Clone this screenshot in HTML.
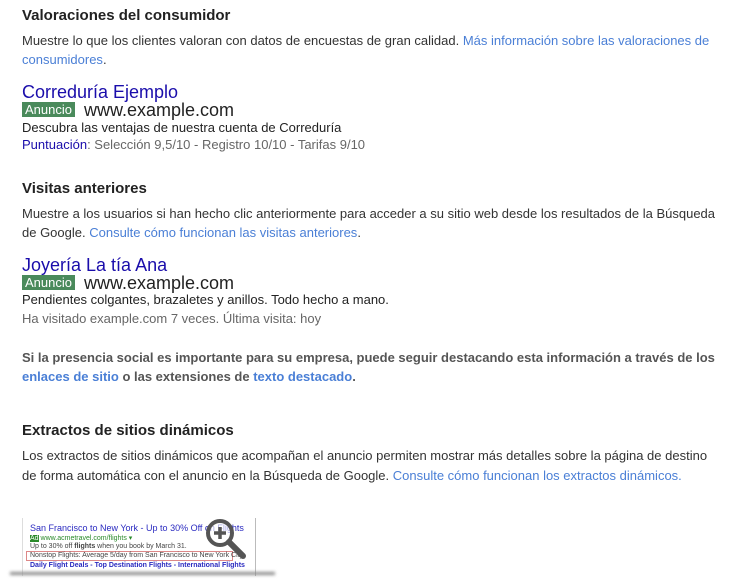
<!DOCTYPE html>
<html><head><meta charset="utf-8"><style>
body{margin:0;width:738px;height:587px;background:#fff;font-family:"Liberation Sans",Arial,sans-serif;color:#222;position:relative;overflow:hidden}
.l{position:absolute;left:22px;white-space:nowrap;font-size:13px;line-height:16px;color:#333}
.h{font-size:15px;font-weight:bold;color:#222;line-height:18px}
a{color:#4a7fd6;text-decoration:none}
.t{font-size:18px;color:#1a0dab;line-height:20px}
.u{font-size:18px;color:#222;line-height:20px}
.ad{display:inline-block;background:#4a8a5b;color:#fff;font-size:13px;line-height:15px;padding:0 3px;margin-right:9px;vertical-align:2px}
.b{font-weight:bold;color:#555}
.g{color:#666}
</style></head><body>
<div class="l h" style="top:7px">Valoraciones del consumidor</div>
<div class="l" style="top:33px">Muestre lo que los clientes valoran con datos de encuestas de gran calidad. <a>Más información sobre las valoraciones de</a></div>
<div class="l" style="top:52px"><a>consumidores</a>.</div>
<div class="l t" style="top:82px">Correduría Ejemplo</div>
<div class="l u" style="top:100px"><span class="ad">Anuncio</span>www.example.com</div>
<div class="l" style="top:120px;color:#222">Descubra las ventajas de nuestra cuenta de Correduría</div>
<div class="l" style="top:137px"><span style="color:#1a0dab">Puntuación</span><span class="g">: Selección 9,5/10 - Registro 10/10 - Tarifas 9/10</span></div>
<div class="l h" style="top:180px">Visitas anteriores</div>
<div class="l" style="top:206px">Muestre a los usuarios si han hecho clic anteriormente para acceder a su sitio web desde los resultados de la Búsqueda</div>
<div class="l" style="top:225px">de Google. <a>Consulte cómo funcionan las visitas anteriores</a>.</div>
<div class="l t" style="top:255px">Joyería La tía Ana</div>
<div class="l u" style="top:273px"><span class="ad">Anuncio</span>www.example.com</div>
<div class="l" style="top:292px;color:#222">Pendientes colgantes, brazaletes y anillos. Todo hecho a mano.</div>
<div class="l g" style="top:311px">Ha visitado example.com 7 veces. Última visita: hoy</div>
<div class="l b" style="top:350px">Si la presencia social es importante para su empresa, puede seguir destacando esta información a través de los</div>
<div class="l b" style="top:369px"><a>enlaces de sitio</a> o las extensiones de <a>texto destacado</a>.</div>
<div class="l h" style="top:422px">Extractos de sitios dinámicos</div>
<div class="l" style="top:448px">Los extractos de sitios dinámicos que acompañan el anuncio permiten mostrar más detalles sobre la página de destino</div>
<div class="l" style="top:468px">de forma automática con el anuncio en la Búsqueda de Google. <a>Consulte cómo funcionan los extractos dinámicos.</a></div>
<div style="position:absolute;left:22px;top:518px;width:232px;height:58px;border-right:1px solid #bbb;border-left:1px solid #ddd"></div>
<div style="position:absolute;left:10px;top:572px;width:265px;height:3px;background:#888;filter:blur(1.5px)"></div>
<div style="position:absolute;left:30px;top:523px;font-size:9px;color:#2a2ac0;white-space:nowrap">San Francisco to New York - Up to 30% Off on Flights</div>
<div style="position:absolute;left:30px;top:534px;font-size:7px;color:#2a8a2a;white-space:nowrap"><span style="background:#2a8a2a;color:#fff">Ad</span> www.acmetravel.com/flights ▾</div>
<div style="position:absolute;left:30px;top:543px;font-size:7px;color:#444;white-space:nowrap">Up to 30% off <b>flights</b> when you book by March 31.</div>
<div style="position:absolute;left:26px;top:551px;width:202px;height:8px;border:1px solid #d88;font-size:7px;color:#444;white-space:nowrap;padding-left:3px;line-height:8px">Nonstop Flights: Average 5/day from San Francisco to New York City</div>
<div style="position:absolute;left:30px;top:562px;font-size:7px;color:#2a2ac0;white-space:nowrap;font-weight:bold">Daily Flight Deals - Top Destination Flights - International Flights</div>
<svg style="position:absolute;left:200px;top:514px" width="50" height="50" viewBox="0 0 50 50"><circle cx="20" cy="19" r="12" fill="rgba(255,255,255,.6)" stroke="#555" stroke-width="4"/><path d="M29 28L43 42" stroke="#555" stroke-width="6" stroke-linecap="round"/><path d="M20 13v12M14 19h12" stroke="#555" stroke-width="3.5"/></svg>
</body></html>
